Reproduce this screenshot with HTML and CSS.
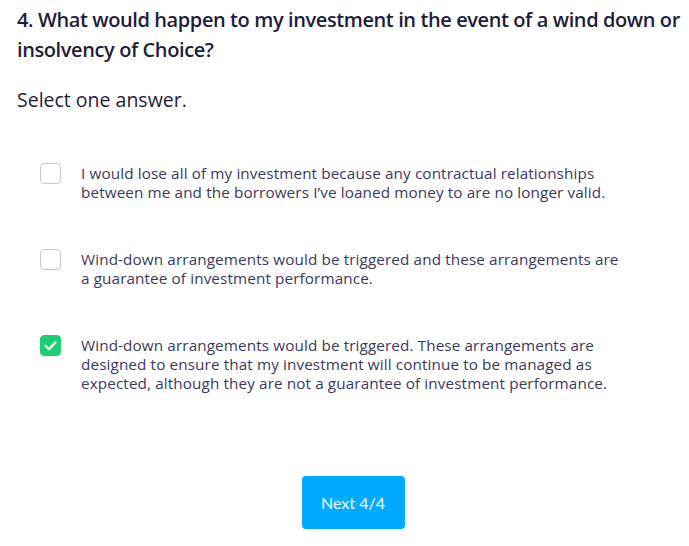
FILE: index.html
```html
<!DOCTYPE html>
<html lang="en">
<head>
<meta charset="utf-8">
<title>Question 4</title>
<link rel="stylesheet" href="styles.css">
</head>
<body>
<main class="quiz">
  <h1 class="question">4. What would happen to my investment in the event of a wind down or insolvency of Choice?</h1>
  <p class="hint">Select one answer.</p>
  <ul class="answers">
    <li class="answer">
      <span class="box"></span>
      <span class="label">I would lose all of my investment because any contractual relationships between me and the borrowers I’ve loaned money to are no longer valid.</span>
    </li>
    <li class="answer">
      <span class="box"></span>
      <span class="label">Wind-down arrangements would be triggered and these arrangements are a guarantee of investment performance.</span>
    </li>
    <li class="answer">
      <span class="box checked">
        <svg viewBox="0 0 21 21" width="21" height="21"><path d="M5.5 10.8 L9 14.2 L15.5 7.2" fill="none" stroke="#fff" stroke-width="2.2" stroke-linecap="round" stroke-linejoin="round"/></svg>
      </span>
      <span class="label">Wind-down arrangements would be triggered. These arrangements are designed to ensure that my investment will continue to be managed as expected, although they are not a guarantee of investment performance.</span>
    </li>
  </ul>
  <div class="actions">
    <button class="next" type="button">Next 4/4</button>
  </div>
</main>
</body>
</html>
```
FILE: styles.css
```css
html, body {
  margin: 0;
  padding: 0;
  background: #ffffff;
}
.quiz {
  padding: 5px 0 0 17px;
  width: 672px;
  font-family: "Open Sans", "Liberation Sans", sans-serif;
}
.question {
  margin: 0;
  font-size: 20px;
  line-height: 30px;
  font-weight: 600;
  letter-spacing: -0.4px;
  color: #1f1d3a;
  width: 670px;
}
.hint {
  margin: 23px 0 0 0;
  font-size: 19.5px;
  line-height: 24px;
  font-weight: 400;
  color: #1f1d3a;
}
.answers {
  list-style: none;
  margin: 51px 0 0 23px;
  padding: 0;
  display: flex;
  flex-direction: column;
  gap: 47px;
}
.answer {
  display: flex;
  align-items: flex-start;
  gap: 20px;
}
.box {
  flex: 0 0 auto;
  width: 21px;
  height: 21px;
  box-sizing: border-box;
  border: 1px solid #c8c8cc;
  border-radius: 4px;
  background: #fff;
  display: flex;
}
.box.checked {
  background: #1ecf72;
  border-color: #1ecf72;
}
.box.checked svg {
  margin: -1px;
}
.label {
  margin-top: 1px;
  font-family: "Open Sans", "Liberation Sans", sans-serif;
  font-size: 15.25px;
  line-height: 19px;
  letter-spacing: 0.12px;
  color: #3b3860;
  width: 546px;
}
.actions {
  display: flex;
  justify-content: center;
  margin-top: 83px;
}
.next {
  width: 103px;
  height: 53px;
  border: none;
  border-radius: 4px;
  background: #00aaff;
  color: #ffffff;
  font-family: "Lato", "Liberation Sans", sans-serif;
  font-size: 16px;
  cursor: pointer;
}
```
